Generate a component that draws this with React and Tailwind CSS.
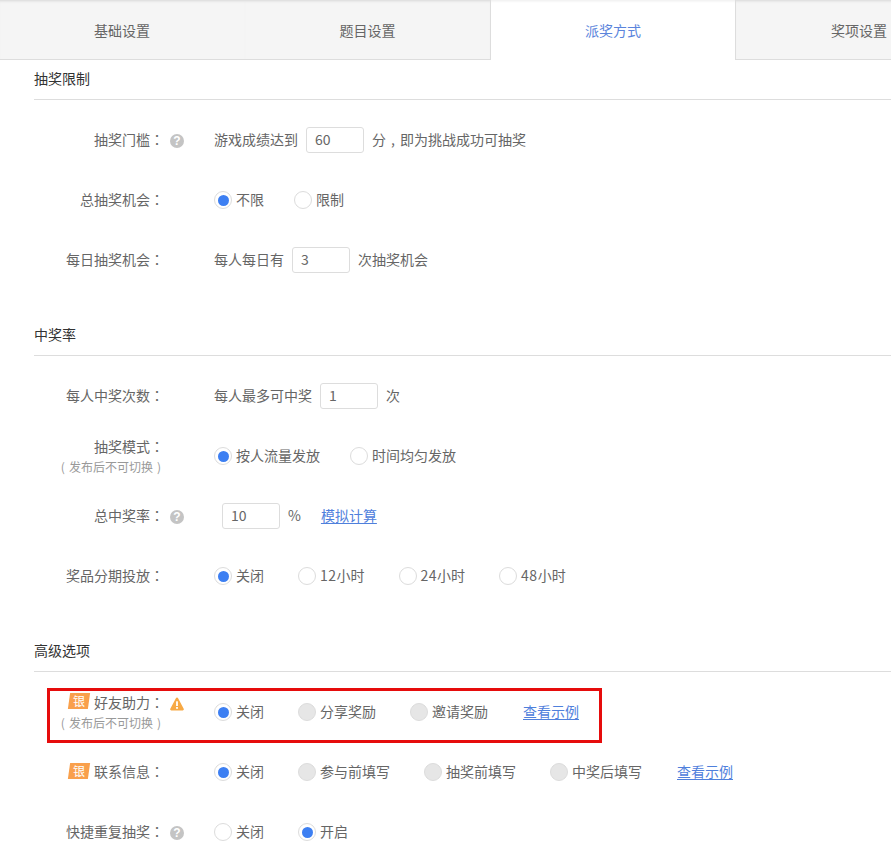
const FONT = "font-['Noto_Sans_CJK_SC',sans-serif]";

function Punct({ children }) {
  return <span className="font-['Noto_Sans_CJK_TC',sans-serif]">{children}</span>;
}

function T({ children, className = "" }) {
  return <span className={`pb-[2px] ${className}`}>{children}</span>;
}

function Help() {
  return (
    <span className="mt-[2px] flex h-[14px] w-[14px] items-center justify-center rounded-full bg-[#c4c4c4] font-['Liberation_Sans',sans-serif] text-[12px] leading-none font-bold text-white">
      ?
    </span>
  );
}

function Warn() {
  return (
    <svg width="14" height="14" viewBox="0 0 14 14" className="mb-[16px]">
      <path d="M7 .6c.5 0 .9.3 1.100.7l5.600 10.500c.4.8-.1 1.600-1 1.600H1.300c-.9 0-1.400-.8-1-1.600L5.900 1.300C6.100.9 6.500.6 7 .6z" fill="#f7a944" />
      <rect x="6.100" y="4.300" width="1.800" height="4.700" fill="#fff" />
      <rect x="6.100" y="10" width="1.800" height="1.800" fill="#fff" />
    </svg>
  );
}

function Badge() {
  return (
    <span className="mr-[5px] mb-[1px] flex h-[16px] w-[20px] -skew-x-[8deg] items-center justify-center bg-[#f9a04c]">
      <span className="skew-x-[8deg] text-[12px] leading-none text-white">银</span>
    </span>
  );
}

function Radio({ label, checked, disabled, gap }) {
  return (
    <div className="flex items-center" style={{ marginRight: gap }}>
      <span
        className={`mr-[4px] flex h-[18px] w-[18px] items-center justify-center rounded-full border border-[#dcdcdc] ${
          disabled ? "bg-[#e6e6e6]" : "bg-white"
        }`}
      >
        {checked && <span className="h-[11px] w-[11px] rounded-full bg-[#3d7ff2]" />}
      </span>
      <T>{label}</T>
    </div>
  );
}

function Input({ value }) {
  return (
    <div className="mx-[8px] flex h-[26px] w-[58px] items-center rounded-[3px] border border-[#dddddd] bg-white pl-[8px] text-[#666]">
      <T>{value}</T>
    </div>
  );
}

function TextLink({ children }) {
  return <a className="pb-[2px] text-[#4f80dc] underline underline-offset-2">{children}</a>;
}

function Label({ text, sub, badge }) {
  return (
    <div className="flex w-[164px] flex-col items-end">
      <div className={`flex items-center ${sub ? "" : "pb-[2px]"}`}>
        {badge && <Badge />}
        <span>
          {text}
          <Punct>：</Punct>
        </span>
      </div>
      {sub && (
        <div className="mt-[1px] flex pr-[3px] text-[12px] leading-[20px] text-[#999]">
          <span>(</span>
          <span className="mr-[4px] ml-[4px]">发布后不可切换</span>
          <span>)</span>
        </div>
      )}
    </div>
  );
}

function Row({ label, sub, badge, icon, children, className = "" }) {
  return (
    <div className={`flex h-[60px] items-center ${className}`}>
      <Label text={label} sub={sub} badge={badge} />
      <div className="flex w-[50px] items-center pl-[6px]">{icon}</div>
      <div className="flex items-center whitespace-nowrap">{children}</div>
    </div>
  );
}

function Section({ title, children, className = "" }) {
  return (
    <section className={className}>
      <h2 className="ml-[34px] flex h-[40px] items-center border-b border-[#dddddd] pb-[3px] text-[14px] font-normal text-[#333]">
        {title}
      </h2>
      <div className="pt-[10px]">{children}</div>
    </section>
  );
}

function Hours({ n }) {
  return (
    <>
      <span className="tracking-[0.5px]">{n}</span>小时
    </>
  );
}

const tabs = [
  { name: "基础设置", sep: true, w: "w-[245px] pr-[1px]" },
  { name: "题目设置", w: "w-[245px]" },
  { name: "派奖方式", active: true, w: "w-[246px]" },
  { name: "奖项设置", w: "w-[246px]" },
];

export default function App() {
  return (
    <div className={`h-[852px] w-[891px] overflow-hidden bg-white text-[14px] leading-[20px] text-[#666] ${FONT}`}>
      <div className="flex h-[60px] w-[982px]">
        {tabs.map((t) => (
          <div
            key={t.name}
            className={`relative flex h-[60px] shrink-0 items-center justify-center ${t.w} ${
              t.active
                ? "border-x border-[#dddddd] bg-white text-[#5b84dc] shadow-[inset_0_3px_3px_-2px_rgba(0,0,0,0.08)]"
                : "border-b border-[#dddddd] bg-[#f5f5f5] shadow-[inset_0_3px_3px_-2px_rgba(0,0,0,0.12)]"
            }`}
          >
            {t.name}
            {t.sep && <span className="absolute top-[17px] right-[-1px] h-[26px] w-px bg-[#dddddd]" />}
          </div>
        ))}
      </div>

      <Section title="抽奖限制">
        <Row label="抽奖门槛" icon={<Help />}>
          <T>游戏成绩达到</T>
          <Input value="60" />
          <T className="flex">
            分<span className="w-[14px] text-center">,</span>即为挑战成功可抽奖
          </T>
        </Row>
        <Row label="总抽奖机会">
          <Radio label="不限" checked gap={30} />
          <Radio label="限制" />
        </Row>
        <Row label="每日抽奖机会">
          <T>每人每日有</T>
          <Input value="3" />
          <T>次抽奖机会</T>
        </Row>
      </Section>

      <Section title="中奖率" className="mt-[26px]">
        <Row label="每人中奖次数">
          <T>每人最多可中奖</T>
          <Input value="1" />
          <T>次</T>
        </Row>
        <Row label="抽奖模式" sub>
          <Radio label="按人流量发放" checked gap={30} />
          <Radio label="时间均匀发放" />
        </Row>
        <Row label="总中奖率" icon={<Help />}>
          <Input value="10" />
          <T className="mr-[20px]">%</T>
          <TextLink>模拟计算</TextLink>
        </Row>
        <Row label="奖品分期投放">
          <Radio label="关闭" checked gap={34} />
          <Radio label={<Hours n="12" />} gap={34} />
          <Radio label={<Hours n="24" />} gap={34} />
          <Radio label={<Hours n="48" />} />
        </Row>
      </Section>

      <Section title="高级选项" className="mt-[26px]">
        <Row label="好友助力" sub badge icon={<Warn />} className="relative">
          <span className="absolute top-[6px] left-[47px] h-[55px] w-[555px] border-[3px] border-[#e60c0c]" />
          <Radio label="关闭" checked gap={34} />
          <Radio label="分享奖励" disabled gap={34} />
          <Radio label="邀请奖励" disabled gap={35} />
          <TextLink>查看示例</TextLink>
        </Row>
        <Row label="联系信息" badge>
          <Radio label="关闭" checked gap={34} />
          <Radio label="参与前填写" disabled gap={34} />
          <Radio label="抽奖前填写" disabled gap={34} />
          <Radio label="中奖后填写" disabled gap={35} />
          <TextLink>查看示例</TextLink>
        </Row>
        <Row label="快捷重复抽奖" icon={<Help />}>
          <Radio label="关闭" gap={34} />
          <Radio label="开启" checked />
        </Row>
      </Section>
    </div>
  );
}
